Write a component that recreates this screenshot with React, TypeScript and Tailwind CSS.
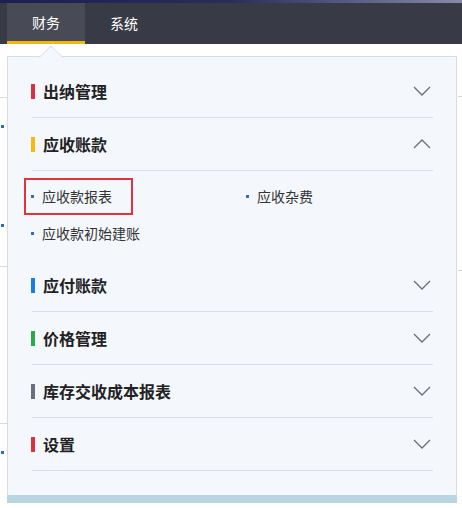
import React from "react";

const Chevron = ({ up }: { up?: boolean }) => (
  <svg width="18" height="10" viewBox="0 0 18 10" className="block">
    <polyline
      points={up ? "1,9 9,1 17,9" : "1,1 9,9 17,1"}
      fill="none"
      stroke="#6b6f78"
      strokeWidth="1.3"
    />
  </svg>
);

type Sec = { title: string; color: string; open?: boolean };

const sections: Sec[] = [
  { title: "出纳管理", color: "bg-[#d8323f]" },
  { title: "应收账款", color: "bg-[#f7b90f]", open: true },
  { title: "应付账款", color: "bg-[#1a7de0]" },
  { title: "价格管理", color: "bg-[#2aa84a]" },
  { title: "库存交收成本报表", color: "bg-[#6a707a]" },
  { title: "设置", color: "bg-[#d8323f]" },
];

const Item = ({ label, boxed }: { label: string; boxed?: boolean }) => (
  <div
    className={
      "flex items-center h-[37px] " +
      (boxed ? "border-2 border-[#e2323c] w-[109px] pl-[5px]" : "pl-[7px]")
    }
  >
    <span className="w-[3px] h-[3px] bg-[#2e6cc0] mr-[8px]" />
    <span className="text-[14px] text-[#333]">{label}</span>
  </div>
);

export default function App() {
  return (
    <div
      className="w-[462px] h-[508px] bg-white relative overflow-hidden"
      style={{ fontFamily: '"Noto Sans CJK SC", "Noto Sans", sans-serif' }}
    >
      {/* backdrop details */}
      <div className="absolute left-0 top-[97px] w-[7px] h-px bg-[#d5d8dd]" />
      <div className="absolute left-[1px] top-[125px] w-[3px] h-[3px] bg-[#2e6cc0]" />
      <div className="absolute left-[1px] top-[224px] w-[3px] h-[3px] bg-[#2e6cc0]" />
      <div className="absolute left-[1px] top-[451px] w-[3px] h-[3px] bg-[#2e6cc0]" />
      <div className="absolute left-0 top-[266px] w-[7px] h-px bg-[#d5d8dd]" />
      <div className="absolute left-0 top-[423px] w-[7px] h-px bg-[#d5d8dd]" />
      <div className="absolute right-0 top-[96px] w-[4px] h-px bg-[#d5d8dd]" />
      <div className="absolute right-0 top-[270px] w-[4px] h-px bg-[#d5d8dd]" />

      {/* top bar */}
      <div className="h-[44px] bg-[#383b45] flex flex-col">
        <div className="h-[3px] bg-gradient-to-r from-[#1c2050] via-[#2a2d5a] to-[#8a8aa8]" />
        <div className="flex flex-1 pl-[7px]">
          <div className="w-[78px] bg-[#484b55] border-b-[3px] border-[#f3b70f] flex items-center justify-center text-white text-[14px]">
            财务
          </div>
          <div className="w-[78px] flex items-center justify-center text-white text-[14px]">
            系统
          </div>
        </div>
      </div>

      {/* panel */}
      <div className="relative ml-[7px] mt-[12px] w-[450px] border border-[#d6dce6] border-b-0 bg-[#f4f7fc]">
        {/* pointer */}
        <svg
          width="24"
          height="13"
          viewBox="0 0 24 13"
          className="absolute left-[31px] top-[-12px]"
        >
          <polygon points="0,12.5 12,1 24,12.5" fill="#f4f7fc" />
          <polyline points="0,12.5 12,1 24,12.5" fill="none" stroke="#d6dce6" strokeWidth="1" />
        </svg>
        <div className="pt-[8px] pl-[23px] pr-[23px]">
          {sections.map((s) => (
            <div key={s.title}>
              <div className="flex items-center justify-between pt-[18px] pb-[18px] h-[53px] border-b border-[#d9dee6] ml-px">
                <div className="flex items-center ml-[-1px]">
                  <span className={"w-[4px] h-[15px] mr-[8px] " + s.color} />
                  <span className="text-[16px] font-bold text-[#222] leading-[16px]">
                    {s.title}
                  </span>
                </div>
                <div className="mr-[2px]">
                  <Chevron up={s.open} />
                </div>
              </div>
              {s.open && (
                <div className="pt-[7px] pb-[7px] ml-[-7px] grid grid-cols-[215px_1fr]">
                  <Item label="应收款报表" boxed />
                  <Item label="应收杂费" />
                  <Item label="应收款初始建账" />
                </div>
              )}
            </div>
          ))}
          <div className="h-[24px]" />
        </div>
        <div className="h-[8px] bg-[#b8d5e2] ml-[-1px] mr-[-1px]" />
      </div>
    </div>
  );
}
